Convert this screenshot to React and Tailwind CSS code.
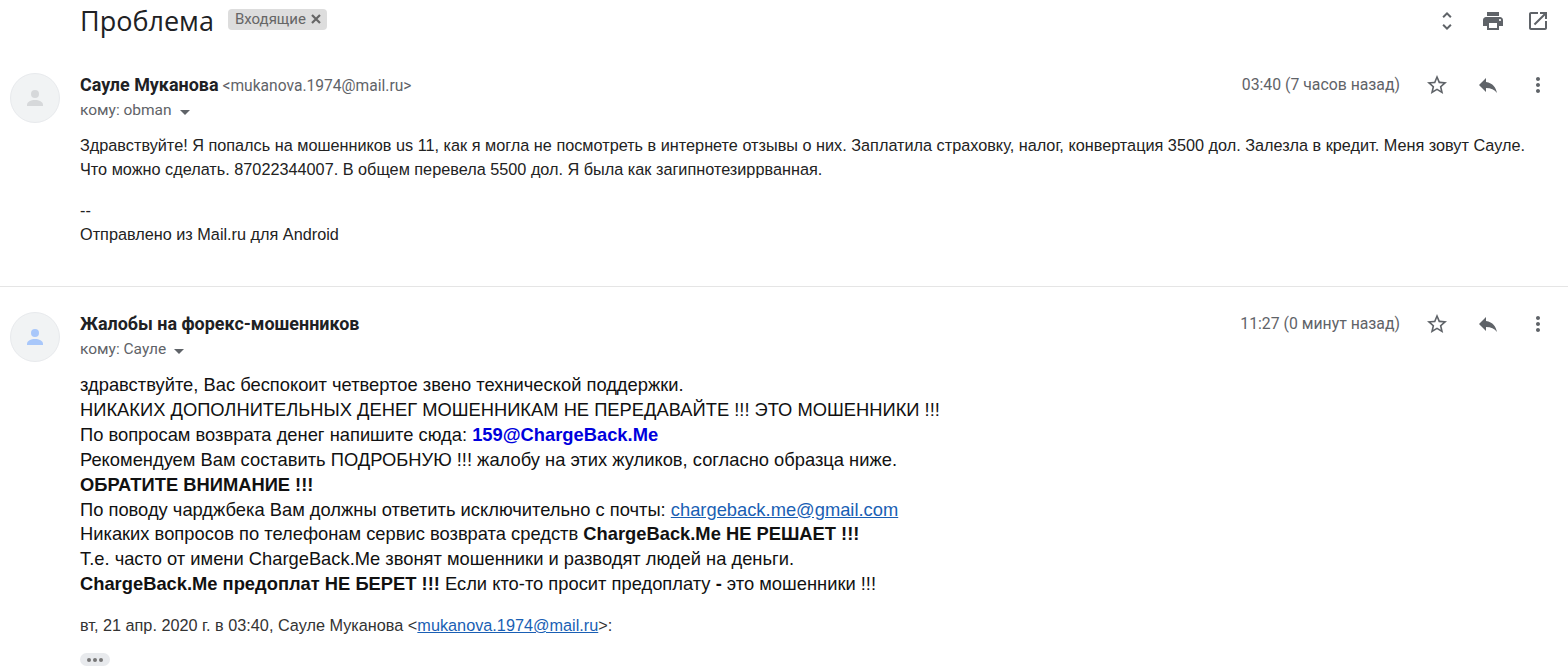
function Icon({ d, size = 24, className = "" }) {
  return (
    <svg width={size} height={size} viewBox="0 0 24 24" fill="currentColor" className={className}>
      <path d={d} />
    </svg>
  );
}

const STAR = "M22 9.24l-7.19-.62L12 2 9.19 8.63 2 9.24l5.46 4.73L5.82 21 12 17.27 18.18 21l-1.630-7.030L22 9.240zM12 15.400l-3.760 2.270 1-4.280-3.320-2.880 4.380-.380L12 6.100l1.710 4.040 4.380.380-3.320 2.880 1 4.280L12 15.400z";
const REPLY = "M10 9V5l-7 7 7 7v-4.100c5 0 8.500 1.600 11 5.100-1-5-4-10-11-11z";
const MORE = "M12 8c1.100 0 2-.9 2-2s-.9-2-2-2-2 .9-2 2 .9 2 2 2zm0 2c-1.100 0-2 .9-2 2s.9 2 2 2 2-.9 2-2-.9-2-2-2zm0 6c-1.100 0-2 .9-2 2s.9 2 2 2 2-.9 2-2-.9-2-2-2z";
const UNFOLD = "M12 5.830L15.170 9l1.410-1.410L12 3 7.410 7.590 8.830 9 12 5.830zm0 12.340L8.830 15l-1.410 1.410L12 21l4.590-4.590L15.170 15 12 18.170z";
const PRINT = "M19 8H5c-1.660 0-3 1.340-3 3v6h4v4h12v-4h4v-6c0-1.660-1.340-3-3-3zm-3 11H8v-5h8v5zm3-7c-.55 0-1-.45-1-1s.45-1 1-1 1 .45 1 1-.45 1-1 1zm-1-9H6v4h12V3z";
const OPEN = "M19 19H5V5h7V3H5c-1.110 0-2 .9-2 2v14c0 1.100.89 2 2 2h14c1.100 0 2-.9 2-2v-7h-2v7zM14 3v2h3.590l-9.830 9.830 1.410 1.410L19 6.410V10h2V3h-7z";

function Avatar({ tint }) {
  return (
    <div className="w-[50px] h-[50px] rounded-full bg-[#f1f3f4] border border-[#e8eaed] flex items-center justify-center shrink-0">
      <svg width="24" height="24" viewBox="0 0 24 24" fill={tint}>
        <circle cx="12" cy="8" r="4" />
        <path d="M4 19c0-3.200 4-5 8-5s8 1.800 8 5v1H4z" />
      </svg>
    </div>
  );
}

function MessageHeader({ tint, name, email, to, time }) {
  return (
    <div className="flex pl-[10px]">
      <Avatar tint={tint} />
      <div className="flex-1 ml-5">
        <div className="flex items-center justify-between h-6">
          <div className="font-['Roboto',sans-serif] whitespace-nowrap">
            <span className="text-[17.930px] font-bold text-[#202124]">{name}</span>
            {email && <span className="text-[#5f6368] text-[15.600px] ml-1">{email}</span>}
          </div>
          <div className="flex items-center text-[#5f6368]">
            <span className="text-[15.800px] font-['Roboto',sans-serif]">{time}</span>
            <Icon d={STAR} className="ml-[25px]" />
            <Icon d={REPLY} className="ml-[27px]" />
            <Icon d={MORE} className="ml-[26px] mr-[18px]" />
          </div>
        </div>
        <div className="flex items-center text-[#5f6368] text-[15.500px] h-5 mt-1 font-['Roboto',sans-serif]">
          {to}
          <span className="ml-2 mt-[2px] w-0 h-0 border-x-[5px] border-x-transparent border-t-[5px] border-t-[#5f6368]" />
        </div>
      </div>
    </div>
  );
}

export default function App() {
  return (
    <div className="w-[1568px] h-[670px] overflow-hidden bg-white text-[#222] font-['Liberation_Sans',sans-serif]">
      {/* subject */}
      <div className="flex items-center justify-between h-[42px] pl-20 pr-[18px]">
        <div className="flex items-center">
          <h1 className="text-[27px] text-[#202124] font-['Open_Sans',sans-serif]">Проблема</h1>
          <span className="ml-[14px] mb-1 h-[21px] pl-[7px] pr-[6px] rounded bg-[#dddddd] text-[#666] text-[15px] flex items-center font-['Roboto',sans-serif]">
            Входящие
            <svg width="10" height="10" viewBox="0 0 10 10" className="ml-[5px]" stroke="currentColor" strokeWidth="2.200">
              <path d="M1 1l8 8M9 1l-8 8" />
            </svg>
          </span>
        </div>
        <div className="flex items-center text-[#5f6368]">
          <Icon d={UNFOLD} />
          <Icon d={PRINT} className="ml-[22px]" />
          <Icon d={OPEN} className="ml-[21px]" />
        </div>
      </div>

      {/* first message */}
      <div className="mt-[31px] h-[214px] border-b border-[#e5e5e5]">
        <MessageHeader tint="#d6d8da" name="Сауле Муканова" email="<mukanova.1974@mail.ru>" to="кому: obman" time="03:40 (7 часов назад)" />
        <div className="pl-20 mt-[10px] text-[16.250px] leading-[24px] text-[#222] whitespace-nowrap">
          <p>Здравствуйте! Я попалсь на мошенников us 11, как я могла не посмотреть в интернете отзывы о них. Заплатила страховку, налог, конвертация 3500 дол. Залезла в кредит. Меня зовут Сауле.</p>
          <p>Что можно сделать. 87022344007. В общем перевела 5500 дол. Я была как загипнотезиррванная.</p>
          <p className="mt-[17px]">--</p>
          <p>Отправлено из Mail.ru для Android</p>
        </div>
      </div>

      {/* second message */}
      <div className="mt-[25px]">
        <MessageHeader tint="#a8c7fa" name="Жалобы на форекс-мошенников" to="кому: Сауле" time="11:27 (0 минут назад)" />
        <div className="pl-20 text-[18.340px] leading-[24.900px] text-[#111] mt-[11px] whitespace-nowrap">
          <p>здравствуйте, Вас беспокоит четвертое звено технической поддержки.</p>
          <p>НИКАКИХ ДОПОЛНИТЕЛЬНЫХ ДЕНЕГ МОШЕННИКАМ НЕ ПЕРЕДАВАЙТЕ !!! ЭТО МОШЕННИКИ !!!</p>
          <p>По вопросам возврата денег напишите сюда: <b className="text-[#0000dd]">159@ChargeBack.Me</b></p>
          <p>Рекомендуем Вам составить ПОДРОБНУЮ !!! жалобу на этих жуликов, согласно образца ниже.</p>
          <p className="font-bold">ОБРАТИТЕ ВНИМАНИЕ !!!</p>
          <p>По поводу чарджбека Вам должны ответить исключительно с почты: <a className="text-[#1a5fb4] underline">chargeback.me@gmail.com</a></p>
          <p>Никаких вопросов по телефонам сервис возврата средств <b>ChargeBack.Me НЕ РЕШАЕТ !!!</b></p>
          <p>Т.е. часто от имени ChargeBack.Me звонят мошенники и разводят людей на деньги.</p>
          <p><b>ChargeBack.Me предоплат НЕ БЕРЕТ !!!</b> Если кто-то просит предоплату <b>-</b> это мошенники !!!</p>
        </div>
        <div className="pl-20 mt-[18px] text-[16.250px] text-[#333] leading-5 whitespace-nowrap">
          вт, 21 апр. 2020 г. в 03:40, Сауле Муканова &lt;<a className="text-[#1a5fb4] underline">mukanova.1974@mail.ru</a>&gt;:
        </div>
        <div className="ml-20 mt-[18px] w-[30px] h-[13px] rounded-full bg-[#e8eaed] flex items-center justify-center gap-[2px]">
          <span className="w-[4px] h-[4px] rounded-full bg-[#777]" />
          <span className="w-[4px] h-[4px] rounded-full bg-[#777]" />
          <span className="w-[4px] h-[4px] rounded-full bg-[#777]" />
        </div>
      </div>
    </div>
  );
}
